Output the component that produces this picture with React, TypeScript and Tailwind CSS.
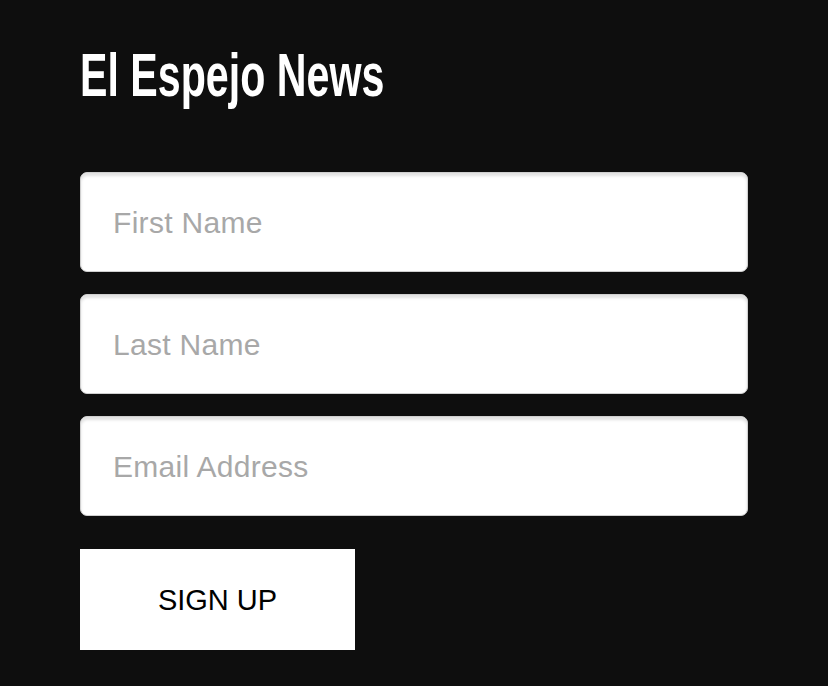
const FIELDS = ['First Name', 'Last Name', 'Email Address'];

export default function App() {
  return (
    <div className="min-h-[686px] w-full bg-[#0e0e0e] px-20 pt-[42px] pb-9">
      <h1 className="-mt-[3px] mb-[61px] inline-block origin-left scale-x-[0.675] font-['Liberation_Sans_Narrow','Liberation_Sans',sans-serif] text-[61px] font-bold leading-[72px] text-white">
        El Espejo News
      </h1>

      <form className="w-[668px]" onSubmit={(e) => e.preventDefault()}>
        <div className="flex flex-col gap-[22px]">
          {FIELDS.map((f) => (
            <input
              key={f}
              type="text"
              placeholder={f}
              className="h-[100px] w-full rounded-[7px] border border-[#cfcfcf] bg-white px-[32px] pt-[2px] font-['Liberation_Sans',sans-serif] text-[30px] tracking-[0.3px] text-[#333] shadow-[inset_0_3px_3px_rgba(0,0,0,0.12)] outline-none placeholder:text-[#a8a8a8]"
            />
          ))}
        </div>

        <button
          type="submit"
          className="mt-[33px] h-[101px] w-[275px] bg-white pt-[3px] font-['Liberation_Sans',sans-serif] text-[29px] text-black"
        >
          SIGN UP
        </button>
      </form>
    </div>
  );
}
